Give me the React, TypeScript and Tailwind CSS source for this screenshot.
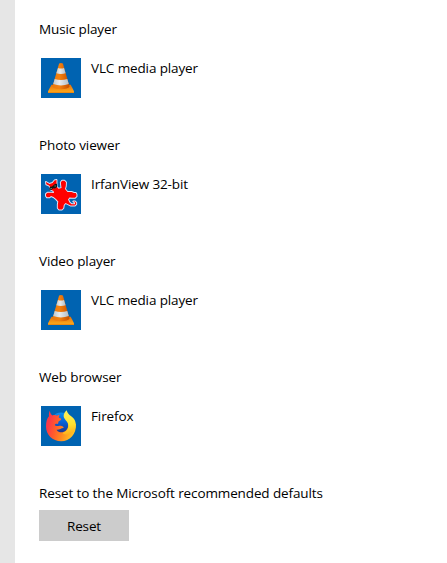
import type { ReactNode } from "react";

const VlcIcon = () => (
  <svg viewBox="0 0 40 40" className="size-10">
    <defs>
      <linearGradient id="coneOrange" x1="0" x2="1">
        <stop offset="0" stopColor="#e8790f" />
        <stop offset="0.4" stopColor="#f5820f" />
        <stop offset="1" stopColor="#c44f00" />
      </linearGradient>
      <linearGradient id="coneWhite" x1="0" x2="1">
        <stop offset="0" stopColor="#bfc8cf" />
        <stop offset="0.4" stopColor="#e9ebec" />
        <stop offset="1" stopColor="#b3bec7" />
      </linearGradient>
      <linearGradient id="coneBase" x1="0" x2="0" y1="0" y2="1">
        <stop offset="0" stopColor="#e8700a" />
        <stop offset="1" stopColor="#ffb01f" />
      </linearGradient>
    </defs>
    <path d="M10.5 26.8H29.7L33 33.2V34.8H7V33.2Z" fill="url(#coneBase)" />
    <path d="M7 33.9H33V35H7Z" fill="#ee8a10" />
    <path d="M18.1 5.6Q20 4.4 21.9 5.6L28.5 28.5Q27 31.3 20 31.3T11.5 28.5Z" fill="url(#coneOrange)" />
    <path d="M17 10Q20 11 23 10L24.6 15.2Q20 16.8 15.3 15.2Z" fill="url(#coneWhite)" />
    <path d="M13.7 21Q20 22.8 26.3 21L27.8 26Q20 28.8 12.2 26Z" fill="url(#coneWhite)" />
  </svg>
);

const IrfanViewIcon = () => (
  <svg viewBox="0 0 40 40" className="size-10">
    <path
      d="M5 8L8.5 10L11.5 9L13.5 6.5L15.5 6L15.5 12.5L17.5 14.8L20.5 14L19.8 8.5L21 6.8H23.5L25 8.5L24.8 12L24 15L26.5 18H30.5L33 19L34.8 19L35.5 20.5V22.3L34 23.7H31L28.5 23.5L27 25.5L28.5 28.5L30.5 30.3H34V28.5L32.3 27.5H34L35.2 28.7V30.3L33.8 31.5H29.5L26.5 30L24.5 29L22.8 31L22.3 34L21 35.5H18L16.8 34L16.8 30.5L17.3 27.5L15 25L12.5 23L10 22L8.5 23.3H6L5 22V20L6.5 18.8H10L13 19L12.5 17L9.5 15.5V13.5L8 11.5L5.3 10.3Z"
      fill="#f00"
      stroke="#dce6fb"
      strokeWidth="1.9"
      strokeLinejoin="round"
      paintOrder="stroke"
    />
    <path d="M9 12.7L11 12.5L14 10L16 9.8V13L14 14.5L12 14.3L10.5 16L8 15.5Z" fill="#151515" />
    <path d="M9.5 14.5h1.3M13.5 12h1.3" stroke="#887" strokeWidth="1" />
  </svg>
);

const FirefoxIcon = () => (
  <svg viewBox="0 0 40 40" className="size-10">
    <defs>
      <linearGradient id="foxBody" x1="0.1" y1="0.35" x2="0.95" y2="0.6">
        <stop offset="0" stopColor="#fb3848" />
        <stop offset="0.3" stopColor="#ff5d2b" />
        <stop offset="0.6" stopColor="#ff8a20" />
        <stop offset="1" stopColor="#ffc224" />
      </linearGradient>
      <linearGradient id="foxTail" x1="0.4" y1="0" x2="0.5" y2="1">
        <stop offset="0" stopColor="#fff45c" />
        <stop offset="0.6" stopColor="#ffe22f" />
        <stop offset="1" stopColor="#ffae1c" />
      </linearGradient>
      <linearGradient id="globe" x1="0.5" y1="0" x2="0.5" y2="1">
        <stop offset="0" stopColor="#0a8ff0" />
        <stop offset="0.45" stopColor="#0761d8" />
        <stop offset="1" stopColor="#1d2f86" />
      </linearGradient>
    </defs>
    <circle cx="20" cy="17.2" r="10.6" fill="url(#globe)" />
    <path
      d="M8.8 4.8C9 7 10.2 8.7 11.5 9.5C13.2 8.8 14.8 9 16 9.8C16.7 9.2 17.7 8.9 18.8 8.8C18 9.6 17.7 10.5 17.8 11.4C18.5 12.3 20.2 12 20.3 13C20 14.4 18.3 14.8 17.5 15.5L17 18C15.4 17.6 13.8 18 13.8 19.3C15.3 20.7 17.3 19.5 19 19.7C21.2 19.8 23.2 21 22.5 22C20.4 21.7 18.6 24 15.5 23.7C17.5 26.8 22 27.2 25 24.5C27.5 22 28 18.5 26.5 15L35 18C35.4 28.5 28.8 35.3 20.2 35.3C11.4 35.2 5 28.7 5 20.5C5 15.7 6 12.4 8 10.3C7.7 8.4 8 6.5 8.8 4.8Z"
      fill="url(#foxBody)"
    />
    <path
      d="M25.7 4.2C23 6.5 21.8 9.6 23.5 12.6C25.2 15.4 28 17 27.2 21.2C26.5 24.5 24.4 26.2 21.5 27C24.6 30 31.8 28.5 33.8 23.5C36 17.7 34.5 13.4 30.2 10.2C27.8 8.4 26.2 6.7 25.7 4.2Z"
      fill="url(#foxTail)"
    />
  </svg>
);

interface IDefaultAppProps {
  category: string;
  name: string;
  icon: ReactNode;
}

const DefaultApp = ({ category, name, icon }: IDefaultAppProps) => (
  <section className="h-[116px]">
    <h2 className="h-5">{category}</h2>
    <button className="mt-[19px] ml-0.5 flex items-start gap-2.5 text-left">
      <span className="size-10 bg-[#0063b1]">{icon}</span>
      <span>{name}</span>
    </button>
  </section>
);

const App = () => {
  return (
    <div className="flex h-[563px] w-[447px] overflow-hidden bg-white font-['Open_Sans','Noto_Sans',sans-serif] text-[13.5px] leading-5 tracking-[-0.12px] whitespace-nowrap text-black">
      <div className="w-[15px] shrink-0 bg-[#e6e6e6]" />
      <main className="flex-1 pt-[19px] pl-6">
        <DefaultApp category="Music player" name="VLC media player" icon={<VlcIcon />} />
        <DefaultApp category="Photo viewer" name="IrfanView 32-bit" icon={<IrfanViewIcon />} />
        <DefaultApp category="Video player" name="VLC media player" icon={<VlcIcon />} />
        <DefaultApp category="Web browser" name="Firefox" icon={<FirefoxIcon />} />
        <h2 className="h-5">Reset to the Microsoft recommended defaults</h2>
        <button className="mt-[7px] h-[31px] w-[90px] bg-[#ccc]">Reset</button>
      </main>
    </div>
  );
};

export default App;
